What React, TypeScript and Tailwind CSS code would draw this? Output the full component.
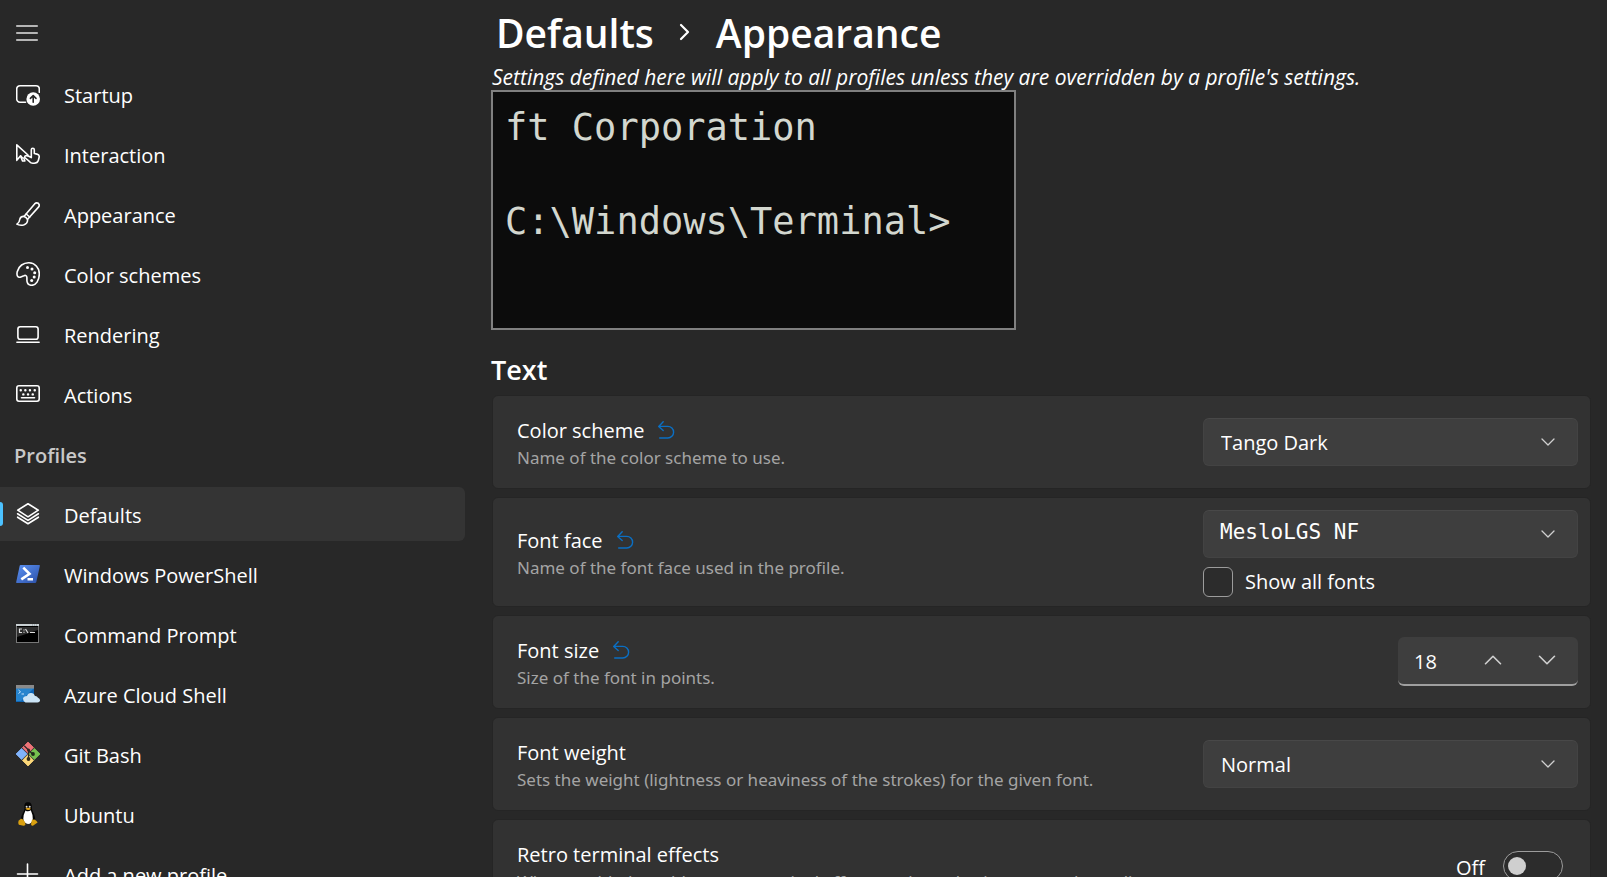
import { useState, type ReactNode } from 'react'

const body = "font-['Open_Sans','Noto_Sans',sans-serif]"

function Stroke({ children }: { children: ReactNode }) {
  return (
    <svg width="24" height="24" viewBox="0 0 24 24" fill="none" stroke="#fff" strokeWidth="1.600" strokeLinecap="round" strokeLinejoin="round" aria-hidden="true">
      {children}
    </svg>
  )
}

function Color({ children }: { children: ReactNode }) {
  return (
    <svg width="24" height="24" viewBox="0 0 24 24" fill="none" aria-hidden="true">
      {children}
    </svg>
  )
}

const StartupIcon = () => (
  <Stroke>
    <path d="M9.5 20.2H4a3.3 3.3 0 0 1-3.3-3.3V7A3.3 3.3 0 0 1 4 3.700H20A3.300 3.300 0 0 1 23.300 7V10.200" />
    <circle cx="17.200" cy="17" r="6.800" fill="#fff" stroke="none" />
    <path d="M17.200 20.300V13.800M14.400 16.400L17.200 13.600L20 16.400" stroke="#282828" />
  </Stroke>
)

const InteractionIcon = () => (
  <Stroke>
    <path d="M6.500 16L4.600 13.800L.8 18.300V2.800L12 13" />
    <path d="M4.600 14.200L6.500 19H8.900L7.800 16" />
    <path d="M15.300 15.600V7.800A1.500 1.500 0 0 1 18.300 7.800V11.500L21 12.100Q23.500 12.700 23.200 15L22.400 18.200Q21.500 21.200 18.200 21.200H16.800Q14.800 21.200 13.600 19.700L8.800 15.500Q8.400 14 9.800 13.700Q12 13.400 15.300 15.600" />
  </Stroke>
)

const BrushIcon = () => (
  <Stroke>
    <path d="M8.200 14.300L18.600 1.900Q20.400 .2 22.300 1.300Q24 2.900 22.700 4.900L11.600 17.300" />
    <path d="M8.100 14.400Q4.800 14.100 3.900 17Q3.500 20.600 .9 22.200Q3 23.600 7.600 23Q12 21.500 11.500 17.500Q10.400 15 8.100 14.400ZM10.200 12L13.700 15" />
  </Stroke>
)

const PaletteIcon = () => (
  <Stroke>
    <path d="M1.200 9.800C2.600 3.800 7.600 .7 13 .8C19.200 1 23.400 6 23.300 12C23.200 18.600 20 23.300 15.600 23.300C12.600 23.200 10.800 21.200 10.900 18V15.500C10.800 13.500 9.500 13 7.900 13.700L4.200 15.200C1.800 15.800 .4 13.500 1.200 9.800Z" />
    <g fill="#fff" stroke="none">
      <circle cx="11.500" cy="5.500" r="1.500" /><circle cx="16" cy="7" r="1.500" /><circle cx="18.700" cy="10.700" r="1.500" /><circle cx="18.200" cy="15" r="1.500" /><circle cx="15.700" cy="18.500" r="1.500" />
    </g>
  </Stroke>
)

const LaptopIcon = () => (
  <Stroke>
    <rect x="1.900" y="4.700" width="20.200" height="12.600" rx="2.300" />
    <path d="M.9 20.200H23.100" />
  </Stroke>
)

const KeyboardIcon = () => (
  <Stroke>
    <rect x=".8" y="3.800" width="22.400" height="15.400" rx="2.200" />
    <path d="M5.500 15.700H18.500" />
    <path strokeWidth="2.400" d="M4.700 8.200h.1M9.300 8.200h.1M13.900 8.200h.1M18.700 8.200h.1M7.300 12.400h.1M12 12.400h.1M16.700 12.400h.1" />
  </Stroke>
)

const LayersIcon = () => (
  <Stroke>
    <path d="M12 1.700L22.300 8.200L12 14.800L1.700 8.200Z" />
    <path d="M1.600 11.800L12 18.400L22.400 11.800M1.600 15.200L12 21.800L22.400 15.200" />
  </Stroke>
)

const PlusIcon = () => (
  <Stroke><path d="M11.500 2V22M1.500 12H21.500" /></Stroke>
)

const PowerShellIcon = () => (
  <Color>
    <defs>
      <linearGradient id="ps" x1="0" y1="0" x2="1" y2="1"><stop stopColor="#5c93f5" /><stop offset="1" stopColor="#2b4fa6" /></linearGradient>
    </defs>
    <path d="M4.600 3H23.200Q24 3 23.900 3.800L20.300 20Q20 21 19 21H.7Q0 21 .2 20L3.700 3.700Q3.900 3 4.600 3Z" fill="url(#ps)" />
    <path d="M7.300 5.700L13.500 11.900L5.300 17.400M11.500 17.300H17" stroke="#fff" strokeWidth="2.600" />
  </Color>
)

const CommandIcon = () => (
  <Color>
    <rect x=".5" y="2.500" width="22" height="18" fill="#000" stroke="#777" />
    <path d="M0 3H23" stroke="#c9d0d3" strokeWidth="2" />
    <path d="M16 3H21" stroke="#8d979c" strokeDasharray="1 1" />
    <path d="M1 5H22V8L1 15Z" fill="#2d2d2d" />
    <path d="M6 7H3.500V10.500H6M8 7.500V8.500M8 9.800V10.800M9.500 7L12 11M14 10.500H19" stroke="#ddd" strokeWidth="1.200" />
  </Color>
)

const AzureIcon = () => (
  <Color>
    <rect y="3" width="18" height="17" fill="#0f65b5" />
    <path d="M0 6H18L5 19H0Z" fill="#2684ce" />
    <path d="M0 3H18V6.500H0Z" fill="#8a8a8a" />
    <path d="M2.500 8L4.500 9.800L2.500 11.500M5.500 12H8" stroke="#dceeff" strokeWidth=".9" />
    <path d="M9.500 20.500A4 4 0 0 1 7 16.600Q7.500 14.200 11 14Q12 10.600 15.200 10.900Q18 11 18.900 14Q21 13.700 22 15.800Q24.200 16.600 24 18.700Q23.600 20.500 21.500 20.500Z" fill="#cbe4f6" />
  </Color>
)

const GitIcon = () => (
  <Color>
    <path d="M12 0L17.600 5.600L12 11.200L6.400 5.600Z" fill="#ee7377" stroke="#ee7377" strokeWidth=".8" strokeLinejoin="round" />
    <path d="M5.600 6.400L11.200 12L5.600 17.600L0 12Z" fill="#80b3fb" stroke="#80b3fb" strokeWidth=".8" strokeLinejoin="round" />
    <path d="M18.400 6.400L24 12L18.400 17.600L12.800 12Z" fill="#76c04f" stroke="#76c04f" strokeWidth=".8" strokeLinejoin="round" />
    <path d="M12 12.800L17.600 18.400L12 24L6.400 18.400Z" fill="#fbd779" stroke="#fbd779" strokeWidth=".8" strokeLinejoin="round" />
    <path d="M8.200 3.800L12.500 8V16M12.500 8L16.500 12" stroke="#2c2727" strokeWidth="1.200" />
    <circle cx="12.500" cy="8" r="1.500" fill="#2c2727" />
    <circle cx="17" cy="12" r="1.900" fill="#1e2b18" />
    <circle cx="12.500" cy="17" r="1.900" fill="#302b1c" />
  </Color>
)

const TuxIcon = () => (
  <Color>
    <path d="M12 .2C9 .2 8 2.200 8.500 6C8.600 9 5.500 12 5 17L8 22H16L19.200 17C19 12 16 9.500 15.900 6C16 2 15 .2 12 .2Z" fill="#050505" />
    <path d="M9.500 8.500Q12 10.300 14.800 8.300Q17 13 16.800 17Q16 22 12 22Q8 21.500 7.300 17Q7.400 12.300 9.500 8.500Z" fill="#fff" />
    <circle cx="10.600" cy="4.800" r="1" fill="#ddd" /><circle cx="13.700" cy="4.800" r="1" fill="#ddd" />
    <path d="M9.300 6.700Q12 4.600 15 6.700Q12.500 9.200 9.300 6.700Z" fill="#e3a51a" />
    <path d="M5 16.800Q7 16.500 9.300 21Q10 23.500 7.500 23.700L2.800 22.800Q1.800 22 2.500 18.800Z" fill="#d9a010" />
    <path d="M16 17.800L18.500 17.500Q21 19 21.600 20.500L17.300 23.500Q15 24.300 15 22Z" fill="#d9a010" />
  </Color>
)

type Item = { label: string; icon: () => ReactNode; selected?: boolean }

const general: Item[] = [
  { label: 'Startup', icon: StartupIcon },
  { label: 'Interaction', icon: InteractionIcon },
  { label: 'Appearance', icon: BrushIcon },
  { label: 'Color schemes', icon: PaletteIcon },
  { label: 'Rendering', icon: LaptopIcon },
  { label: 'Actions', icon: KeyboardIcon },
]

const profiles: Item[] = [
  { label: 'Defaults', icon: LayersIcon, selected: true },
  { label: 'Windows PowerShell', icon: PowerShellIcon },
  { label: 'Command Prompt', icon: CommandIcon },
  { label: 'Azure Cloud Shell', icon: AzureIcon },
  { label: 'Git Bash', icon: GitIcon },
  { label: 'Ubuntu', icon: TuxIcon },
  { label: 'Add a new profile', icon: PlusIcon },
]

function NavItem({ label, icon: Icon, selected }: Item) {
  return (
    <li className="h-15 py-[3px]">
      <a
        href="#"
        aria-current={selected ? 'page' : undefined}
        className={`relative flex h-full items-center gap-6 rounded-r-md pl-4 text-xl whitespace-nowrap text-white ${selected ? 'bg-[#343434]' : ''}`}
      >
        {selected && <span className="absolute left-0 h-6 w-[3px] rounded-r-sm bg-[#4cc2ff]" />}
        <Icon />
        <span className="pt-1">{label}</span>
      </a>
    </li>
  )
}

function Chevron({ up, large }: { up?: boolean; large?: boolean }) {
  return (
    <svg className={large ? 'h-5 w-5' : 'h-4 w-4'} viewBox="0 0 16 16" fill="none" stroke="#d0d0d0" strokeWidth="1.300" strokeLinecap="round" strokeLinejoin="round" aria-hidden="true">
      <path d={up ? 'M2 11L8 5L14 11' : 'M2 5L8 11L14 5'} />
    </svg>
  )
}

function Dropdown({ id, label, value, mono }: { id: string; label: string; value: string; mono?: boolean }) {
  return (
    <div className="grid w-[375px] items-center">
      <select
        id={id}
        aria-label={label}
        className={`col-start-1 row-start-1 h-12 w-full appearance-none rounded-md border border-[#434343] border-t-[#484848] bg-[#3e3e3e] text-white ${mono ? "pb-0.5 pl-4 font-['DejaVu_Sans_Mono',monospace] text-[21px]" : 'pt-0.5 pl-[17px] text-xl'}`}
      >
        <option>{value}</option>
      </select>
      <span className="pointer-events-none col-start-1 row-start-1 mr-[22px] justify-self-end">
        <Chevron />
      </span>
    </div>
  )
}

function Row({ title, hint, reset, target, tall, children }: { title: string; hint: string; reset?: boolean; target: string; tall?: boolean; children: ReactNode }) {
  return (
    <div className={`flex items-center justify-between rounded-md border border-[#252525] bg-[#323232] pr-3 pl-6 ${tall ? 'h-[110px]' : 'h-[94px]'}`}>
      <div className="pt-1">
        <div className="flex h-7 items-center gap-3">
          <label htmlFor={target} className="text-xl text-white">{title}</label>
          {reset && (
            <button type="button" aria-label={`Reset ${title}`} className="pb-0.5">
              <svg width="20" height="20" viewBox="0 0 20 20" fill="none" stroke="#0a6fc4" strokeWidth="1.400" strokeLinecap="round" strokeLinejoin="round" aria-hidden="true">
                <path d="M7.200 1.800L2.700 6.400L7.200 10.600M2.700 6.400H11.800A5.800 5.800 0 0 1 11.800 18H3.700" />
              </svg>
            </button>
          )}
        </div>
        <p className="font-['Noto_Sans',sans-serif] text-[17px] leading-[26px] text-[#a4a4a4]">{hint}</p>
      </div>
      {children}
    </div>
  )
}

export default function App() {
  const [size, setSize] = useState(18)
  const [retro, setRetro] = useState(false)
  return (
    <div className={`${body} flex h-screen overflow-hidden bg-[#282828] text-white`}>
      <nav className="w-[465px] shrink-0">
        <button type="button" aria-label="Toggle navigation" className="flex h-16 items-center pt-0.5 pl-4">
          <svg width="22" height="18" viewBox="0 0 22 18" stroke="#e4e4e4" strokeWidth="1.400" strokeLinecap="round" aria-hidden="true">
            <path d="M.7 2H21.300M.7 9H21.300M.7 16H21.300" />
          </svg>
        </button>
        <ul>{general.map((i) => <NavItem key={i.label} {...i} />)}</ul>
        <h2 className="flex h-15 items-center pt-1 pl-[14px] text-xl font-semibold text-[#c8c8c8]">Profiles</h2>
        <ul>{profiles.map((i) => <NavItem key={i.label} {...i} />)}</ul>
      </nav>
      <main className="min-w-0 flex-1 pr-4 pl-[26px]">
        <h1 className="flex h-[66px] items-center pl-[5px] text-[39px] font-semibold">
          <a href="#">Defaults</a>
          <svg className="mr-6 mb-0.5 ml-[22px]" width="16" height="20" viewBox="0 0 16 20" fill="none" stroke="#fff" strokeWidth="2.200" strokeLinecap="round" strokeLinejoin="round" aria-hidden="true">
            <path d="M5 3L12 10L5 17" />
          </svg>
          <span>Appearance</span>
        </h1>
        <p className="h-6 pl-px text-[21px] leading-[23px] whitespace-nowrap italic">Settings defined here will apply to all profiles unless they are overridden by a profile's settings.</p>
        <pre className="h-60 w-[525px] overflow-hidden border-2 border-[#808080] bg-[#0c0c0c] px-3 py-3 font-['DejaVu_Sans_Mono',monospace] text-[37px] leading-[47px] text-[#d3d7cf]">{'ft Corporation\n\nC:\\Windows\\Terminal>'}</pre>
        <h2 className="flex h-[65px] items-end pb-[5px] text-[27px] font-semibold">Text</h2>
        <div className="flex flex-col gap-2 pl-px">
          <Row title="Color scheme" hint="Name of the color scheme to use." reset target="scheme">
            <Dropdown id="scheme" label="Color scheme" value="Tango Dark" />
          </Row>
          <Row title="Font face" hint="Name of the font face used in the profile." reset target="face" tall>
            <div className="flex flex-col gap-[9px] pt-0.5">
              <Dropdown id="face" label="Font face" value="MesloLGS NF" mono />
              <label className="flex items-center gap-3 text-xl leading-[30px]">
                <input type="checkbox" className="h-[30px] w-[30px] appearance-none rounded-md border border-[#9c9c9c] bg-[#2c2c2c]" />
                Show all fonts
              </label>
            </div>
          </Row>
          <Row title="Font size" hint="Size of the font in points." reset target="size">
            <div className="mb-0.5 flex h-[49px] w-[180px] items-center rounded-md border-b-2 border-[#9f9f9f] bg-[#3e3e3e] pr-[21px]">
              <input id="size" type="text" value={size} onChange={(e) => setSize(Number(e.target.value) || 0)} className="w-0 flex-1 bg-transparent pt-1 pl-4 text-xl text-white" />
              <button type="button" aria-label="Increase" className="mr-[34px]" onClick={() => setSize(size + 1)}><Chevron up large /></button>
              <button type="button" aria-label="Decrease" onClick={() => setSize(size - 1)}><Chevron large /></button>
            </div>
          </Row>
          <Row title="Font weight" hint="Sets the weight (lightness or heaviness of the strokes) for the given font." target="weight">
            <Dropdown id="weight" label="Font weight" value="Normal" />
          </Row>
          <Row title="Retro terminal effects" hint="When enabled, enables retro terminal effects such as glowing text and scan lines." target="retro">
            <label className="mr-[15px] flex items-center gap-[18px] text-xl">
              <span className="pt-1">{retro ? 'On' : 'Off'}</span>
              <input
                id="retro"
                type="checkbox"
                role="switch"
                checked={retro}
                onChange={(e) => setRetro(e.target.checked)}
                className="flex h-[30px] w-15 appearance-none items-center rounded-full border border-[#9c9c9c] bg-[#2c2c2c] px-1 before:h-[18px] before:w-[18px] before:rounded-full before:bg-[#cfcfcf] checked:justify-end"
              />
            </label>
          </Row>
        </div>
      </main>
    </div>
  )
}
